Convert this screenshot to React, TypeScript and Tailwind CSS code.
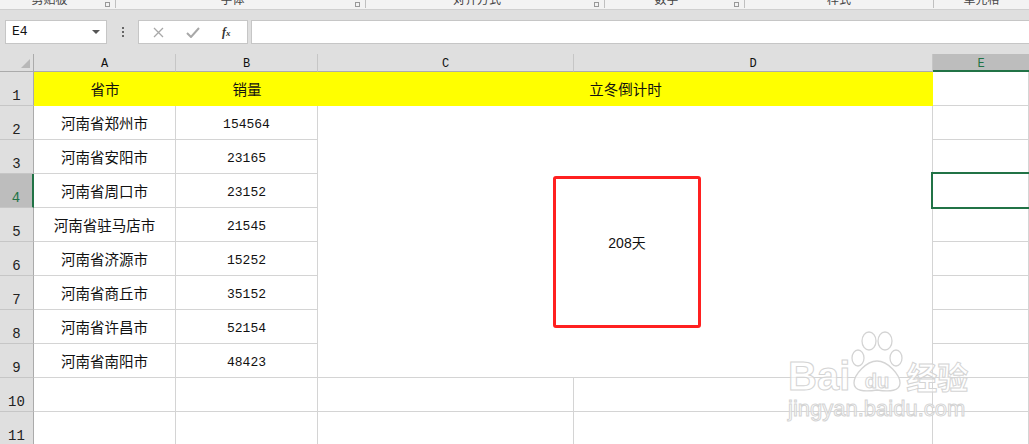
import React from 'react';

const cjk = { fontFamily: '"Noto Sans CJK SC", "Noto Sans", sans-serif' };
const mono = { fontFamily: '"Liberation Mono", "Noto Sans CJK SC", monospace' };

const data = [
  ['河南省郑州市', '154564'],
  ['河南省安阳市', '23165'],
  ['河南省周口市', '23152'],
  ['河南省驻马店市', '21545'],
  ['河南省济源市', '15252'],
  ['河南省商丘市', '35152'],
  ['河南省许昌市', '52154'],
  ['河南省南阳市', '48423'],
];

const ribbon = [
  { label: '剪贴板', w: 'w-[116px]', launcher: true },
  { label: '字体', w: 'w-[250px]', launcher: true },
  { label: '对齐方式', w: 'w-[239px]', launcher: true },
  { label: '数字', w: 'w-[140px]', launcher: true },
  { label: '样式', w: 'w-[189px]', launcher: false },
  { label: '单元格', w: 'flex-1', launcher: false },
];

const RowHead = ({ n, active }: { n: number; active?: boolean }) => (
  <div
    className={
      'flex items-end justify-center pb-[1px] text-[14px] leading-[16px] border-b border-[#c6c6c6] ' +
      (active
        ? 'bg-[#bdbdbd] text-[#217346] border-r-2 border-r-[#217346]'
        : 'bg-[#dfdfdf] text-[#222] border-r border-r-[#ababab]')
    }
    style={mono}
  >
    {n}
  </div>
);

const ColHead = ({ l, active }: { l: string; active?: boolean }) => (
  <div
    className={
      'flex items-center justify-center pt-[3px] text-[12px] ' +
      (active
        ? 'bg-[#bdbdbd] text-[#217346] border-b-2 border-[#217346]'
        : 'bg-[#dfdfdf] text-[#111] border-b border-[#ababab] border-r border-r-[#c6c6c6]')
    }
    style={mono}
  >
    {l}
  </div>
);

const Cell = ({ children, num }: { children?: React.ReactNode; num?: boolean }) => (
  <div
    className={
      'flex items-center justify-center border-r border-b border-[#d4d4d4] text-[#111] ' +
      (num ? 'text-[13px] pt-[4px]' : 'text-[14.5px]')
    }
    style={num ? mono : cjk}
  >
    {children}
  </div>
);

const Yellow = ({ children, span }: { children?: React.ReactNode; span?: boolean }) => (
  <div
    className={
      'flex items-center justify-center bg-[#ffff00] text-[14.5px] text-[#111] ' +
      (span ? 'col-span-2' : '')
    }
    style={cjk}
  >
    {children}
  </div>
);

const Paw = () => (
  <svg width="58" height="62" viewBox="0 0 58 62" className="-mx-[2px]">
    <g fill="rgba(255,255,255,0.7)" stroke="#d4d4d4" strokeWidth="1.3">
      <ellipse cx="10" cy="27" rx="6" ry="8" />
      <ellipse cx="21" cy="10" rx="7" ry="9" />
      <ellipse cx="37" cy="10" rx="7" ry="9" />
      <ellipse cx="48" cy="27" rx="6" ry="8" />
      <path d="M29 30 C40 30 52 44 52 52 C52 60 42 61 29 59 C16 61 6 60 6 52 C6 44 18 30 29 30 Z" />
    </g>
    <text
      x="29"
      y="57"
      textAnchor="middle"
      fontSize="20"
      fontWeight="bold"
      fontFamily="Liberation Sans, sans-serif"
      fill="rgba(255,255,255,0.7)"
      stroke="#d4d4d4"
      strokeWidth="1"
    >
      du
    </text>
  </svg>
);

export default function App() {
  return (
    <div className="relative w-[1029px] h-[444px] overflow-hidden bg-white">
      {/* ribbon group labels (cut off by the window like the reference) */}
      <div className="flex h-[10px] overflow-hidden bg-[#f3f3f3] border-b border-[#cfcfcf]">
        {ribbon.map((g) => (
          <div key={g.label} className={'flex h-full ' + g.w}>
            <div className="flex-1 text-center -mt-[8px] text-[12px] leading-[14px] text-[#444]" style={cjk}>
              {g.label}
            </div>
            {g.launcher && (
              <div className="w-[16px] flex items-start justify-center pt-[2px]">
                <div className="w-[5px] h-[5px] border border-[#999]" />
              </div>
            )}
            {g.label !== '单元格' && <div className="w-px h-[8px] bg-[#c0c0c0]" />}
          </div>
        ))}
      </div>

      {/* formula bar */}
      <div className="flex items-start h-[44px] pt-[10px] pl-[5px] bg-[#dfdfdf]">
        <div className="flex items-center justify-between w-[102px] h-[24px] bg-white border border-[#c6c6c6] pl-[6px] pr-[6px]">
          <span className="text-[13px] text-[#111]" style={mono}>E4</span>
          <span className="w-0 h-0 border-l-[4px] border-r-[4px] border-t-[4px] border-l-transparent border-r-transparent border-t-[#555]" />
        </div>
        <div className="flex flex-col items-center justify-center gap-[2px] w-[31px] h-[24px]">
          <span className="w-[2px] h-[2px] bg-[#666]" />
          <span className="w-[2px] h-[2px] bg-[#666]" />
          <span className="w-[2px] h-[2px] bg-[#666]" />
        </div>
        <div className="flex items-center w-[110px] h-[24px] bg-white border border-[#c6c6c6] pl-[14px] gap-[22px]">
          <svg width="11" height="11" viewBox="0 0 11 11">
            <path d="M1 1 L10 10 M10 1 L1 10" stroke="#a8a8a8" strokeWidth="1.3" />
          </svg>
          <svg width="14" height="11" viewBox="0 0 14 11">
            <path d="M1 6 L5 10 L13 1" stroke="#a8a8a8" strokeWidth="2" fill="none" />
          </svg>
          <span className="italic text-[12px] text-[#333] font-bold" style={{ fontFamily: '"Liberation Serif", serif' }}>
            f<span className="text-[9px]">x</span>
          </span>
        </div>
        <div className="flex-1 h-[24px] ml-[3px] bg-white border border-[#c6c6c6] border-r-0" />
      </div>

      {/* sheet grid */}
      <div className="relative">
        <div className="grid grid-cols-[34px_142px_142px_256px_359px_1fr] grid-rows-[18px_repeat(11,34px)]">
          <div className="relative bg-[#dfdfdf] border-b border-r border-[#ababab]">
            <div className="absolute right-[3px] bottom-[3px] w-0 h-0 border-l-[9px] border-l-transparent [border-bottom:9px_solid_#b8b8b8]" />
          </div>
          <ColHead l="A" />
          <ColHead l="B" />
          <ColHead l="C" />
          <ColHead l="D" />
          <ColHead l="E" active />

          <RowHead n={1} />
          <Yellow>省市</Yellow>
          <Yellow>销量</Yellow>
          <Yellow span>立冬倒计时</Yellow>
          <Cell />

          {data.map(([city, n], i) => (
            <React.Fragment key={city}>
              <RowHead n={i + 2} active={i + 2 === 4} />
              <Cell>{city}</Cell>
              <Cell num>{n}</Cell>
              {i === 0 && <div className="col-span-2 row-span-8 border-r border-b border-[#d4d4d4]" />}
              <Cell />
            </React.Fragment>
          ))}

          {[10, 11].map((r) => (
            <React.Fragment key={r}>
              <RowHead n={r} />
              <Cell />
              <Cell />
              <Cell />
              <Cell />
              <Cell />
            </React.Fragment>
          ))}
        </div>

        {/* active cell E4 */}
        <div className="absolute left-[931px] top-[118px] w-[110px] h-[37px] border-2 border-[#217346]" />

        {/* text box shape */}
        <div className="absolute left-[553px] top-[122px] w-[148px] h-[152px] border-[3px] border-[#ff2020] rounded-[3px] bg-white flex justify-center pt-[56px]">
          <span className="text-[14px] leading-[16px] text-[#111]" style={{ fontFamily: '"Liberation Sans", "Noto Sans CJK SC", sans-serif' }}>
            208天
          </span>
        </div>
      </div>

      {/* watermark */}
      <div className="absolute left-[788px] top-[331px] pointer-events-none select-none">
        <div className="flex items-end">
          <span
            className="text-[40px] leading-[34px] font-bold text-white/60 [-webkit-text-stroke:1px_#d4d4d4]"
            style={{ fontFamily: '"Liberation Sans", sans-serif' }}
          >
            Bai
          </span>
          <Paw />
          <span
            className="ml-[2px] text-[31px] leading-[34px] font-bold text-white/60 [-webkit-text-stroke:1px_#d4d4d4]"
            style={cjk}
          >
            经验
          </span>
        </div>
        <div
          className="mt-[4px] text-[22px] leading-[24px] text-white/60 [-webkit-text-stroke:1px_#d4d4d4]"
          style={{ fontFamily: '"Liberation Sans", sans-serif' }}
        >
          jingyan.baidu.com
        </div>
      </div>
    </div>
  );
}
